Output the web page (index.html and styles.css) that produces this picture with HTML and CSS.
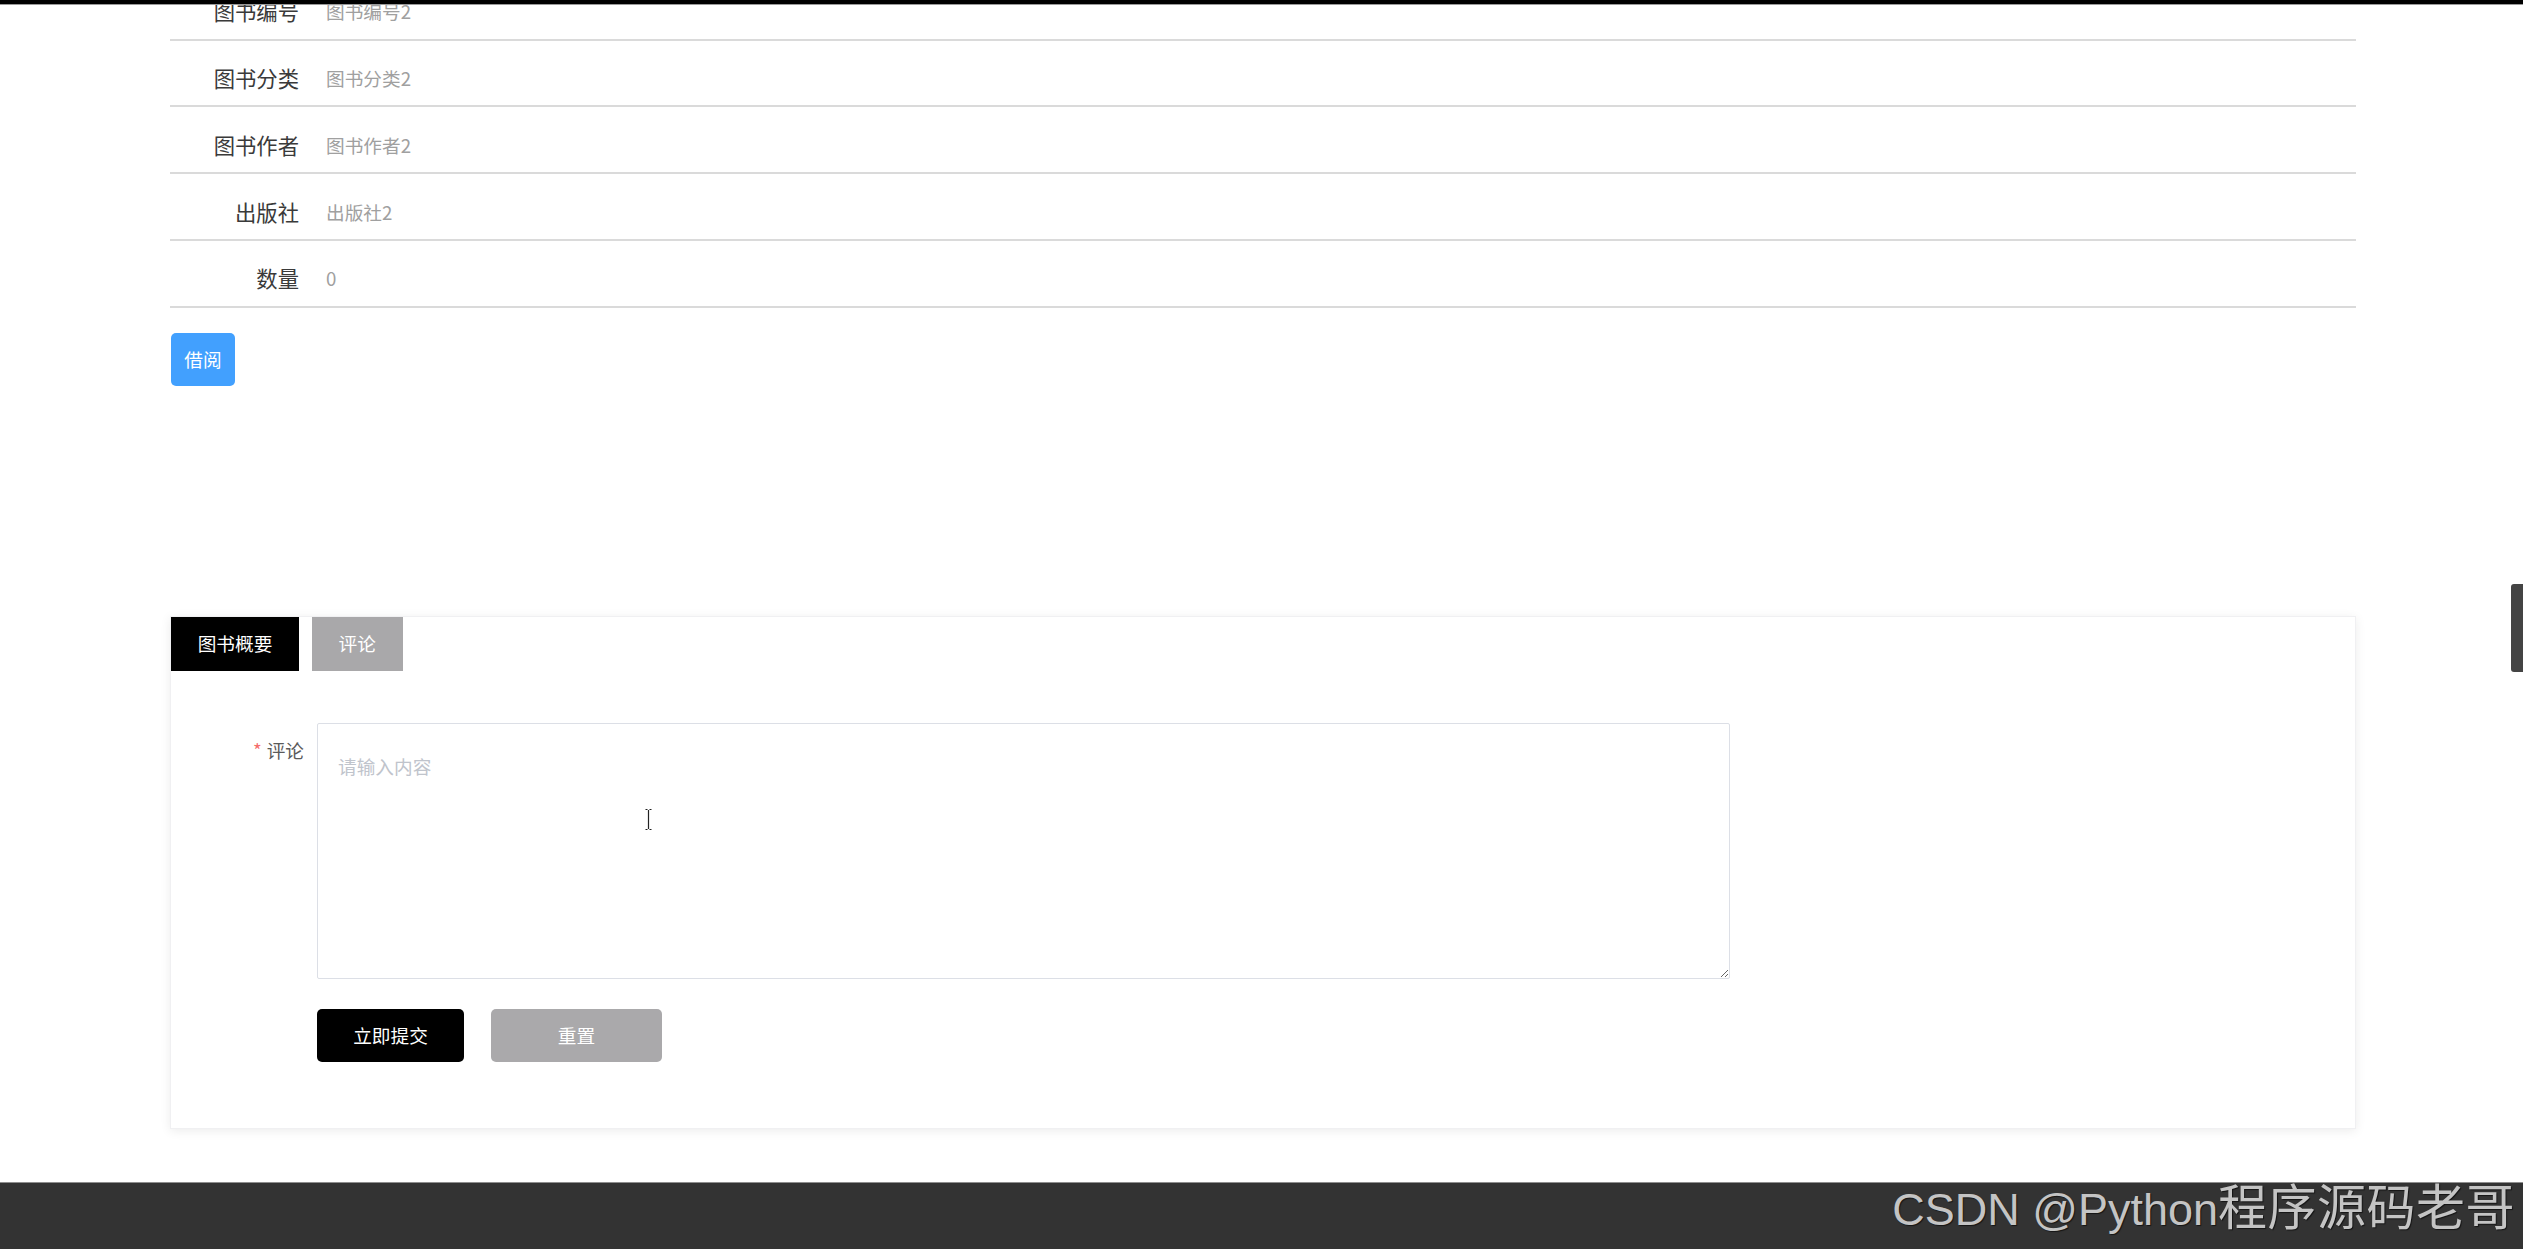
FILE: index.html
```html
<!DOCTYPE html>
<html lang="zh-CN">
<head>
<meta charset="utf-8">
<title>图书详情</title>
<link rel="stylesheet" href="styles.css">
</head>
<body>
<div class="topbar"></div>
<main class="page">
  <section class="details">
    <div class="row"><span class="label">图书编号</span><span class="value">图书编号2</span></div>
    <div class="row"><span class="label">图书分类</span><span class="value">图书分类2</span></div>
    <div class="row"><span class="label">图书作者</span><span class="value">图书作者2</span></div>
    <div class="row"><span class="label">出版社</span><span class="value">出版社2</span></div>
    <div class="row"><span class="label">数量</span><span class="value">0</span></div>
  </section>
  <div class="borrow-wrap"><button class="btn-borrow" type="button">借阅</button></div>
  <section class="card">
    <div class="tabs">
      <div class="tab tab-active">图书概要</div>
      <div class="tab">评论</div>
    </div>
    <form class="comment-form">
      <div class="form-item">
        <label class="form-label"><span class="req">*</span>评论</label>
        <textarea class="textarea" placeholder="请输入内容"></textarea>
      </div>
      <div class="form-actions">
        <button class="btn btn-submit" type="button">立即提交</button>
        <button class="btn btn-reset" type="button">重置</button>
      </div>
    </form>
  </section>
</main>
<footer class="footer">
  <span class="wm"><span class="wm-lat">CSDN @Python</span><span class="wm-cjk">程序源码老哥</span></span>
</footer>
<div class="side-handle"></div>
<svg class="cursor" width="9" height="23" viewBox="0 0 9 23">
  <path d="M1.5 1.5h2M5.5 1.5h2M4.5 2v19M1.5 21.5h2M5.5 21.5h2" stroke="#222" stroke-width="1.2" fill="none"/>
</svg>
</body>
</html>
```
FILE: styles.css
```css
html, body {
  margin: 0;
  padding: 0;
  background: #ffffff;
  overflow: hidden;
}
body {
  font-family: "Noto Sans CJK SC", "Noto Sans", sans-serif;
  color: #333;
}
.topbar {
  position: fixed;
  top: 0;
  left: 0;
  right: 0;
  height: 4px;
  background: #000;
  border-bottom: 1px solid #9a9a9a;
  z-index: 10;
}
.page {
  width: 2186px;
  margin-left: 170px;
  margin-top: -26.25px;
}
.details {
  display: flex;
  flex-direction: column;
}
.row {
  display: flex;
  align-items: center;
  padding: 21.5px 0 11.25px;
  line-height: 32px;
  border-bottom: 2px solid #dadada;
}
.label {
  width: 129px;
  text-align: right;
  font-size: 21.33px;
  color: #3a3a3a;
}
.value {
  margin-left: 27px;
  font-size: 18.67px;
  color: #a0a0a0;
}
.borrow-wrap {
  padding-top: 25.5px;
}
.btn-borrow {
  display: block;
  width: 64px;
  height: 53px;
  box-sizing: border-box;
  margin-left: 1px;
  padding: 0 0 2px;
  border: none;
  border-radius: 5px;
  background: #42a0fe;
  color: #fff;
  font-family: inherit;
  font-size: 18.67px;
  line-height: 51px;
}
.card {
  margin-top: 230px;
  height: 513px;
  box-sizing: border-box;
  border: 1px solid #f0f0f2;
  background: #fff;
  box-shadow: 0 2px 10px rgba(0, 0, 0, 0.08);
}
.tabs {
  display: flex;
  gap: 13px;
}
.tab {
  height: 54px;
  box-sizing: border-box;
  line-height: 52px;
  padding: 0 26.67px 2px;
  background: #a9a8aa;
  color: #fff;
  font-size: 18.67px;
}
.tab-active {
  background: #000;
}
.comment-form {
  margin-top: 52px;
  padding-left: 13px;
}
.form-item {
  display: flex;
  align-items: flex-start;
}
.form-label {
  width: 133px;
  box-sizing: border-box;
  padding-right: 13px;
  text-align: right;
  font-size: 18.67px;
  line-height: 53px;
  color: #5a5a5a;
}
.req {
  color: #f56c6c;
  margin-right: 5px;
}
.textarea {
  width: 1413px;
  height: 256px;
  box-sizing: border-box;
  margin: 0;
  padding: 28px 20px 6px;
  border: 1px solid #dcdfe6;
  border-radius: 2px;
  font-family: inherit;
  font-size: 18.67px;
  line-height: 28px;
  color: #606266;
  background: #fff;
  resize: vertical;
  outline: none;
}
.textarea::placeholder {
  color: #c0c4cc;
}
.form-actions {
  display: flex;
  gap: 27px;
  margin-top: 30px;
  padding-left: 133px;
}
.btn {
  height: 53px;
  box-sizing: border-box;
  padding: 0 0 2px;
  border: none;
  border-radius: 5px;
  color: #fff;
  font-family: inherit;
  font-size: 18.67px;
  line-height: 51px;
}
.btn-submit {
  width: 147px;
  background: #000;
}
.btn-reset {
  width: 171px;
  background: #aaa9ab;
}
.footer {
  margin-top: 53px;
  height: 67px;
  box-sizing: border-box;
  border-top: 1px solid #8e8e8e;
  background: #333333;
  display: flex;
  justify-content: flex-end;
  align-items: flex-start;
  padding-right: 8px;
}
.wm {
  display: flex;
  align-items: baseline;
  margin-top: -15px;
  color: #c4c4c4;
  text-shadow: 1px 1px 1px rgba(0, 0, 0, 0.6);
  white-space: nowrap;
}
.wm-lat {
  font-family: "Liberation Sans", Arial, sans-serif;
  font-size: 45px;
}
.wm-cjk {
  font-family: "Noto Sans CJK SC", sans-serif;
  font-size: 49px;
  letter-spacing: 0.5px;
}
.side-handle {
  position: fixed;
  right: 0;
  top: 584px;
  width: 12px;
  height: 88px;
  background: #444;
  border-radius: 3px 0 0 3px;
}
.cursor {
  position: absolute;
  left: 644px;
  top: 808px;
}
```
